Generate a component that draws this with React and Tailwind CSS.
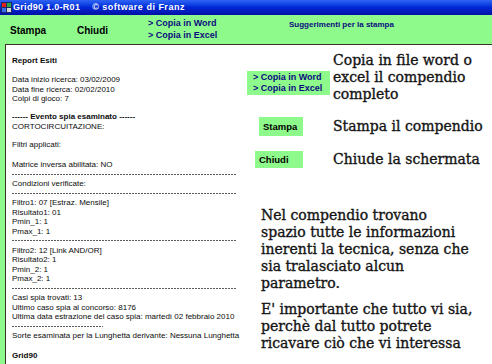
export default function App() {
  const dash = (w) => (
    <div className="h-[9.5px] flex items-center">
      <div
        className="h-px bg-[image:repeating-linear-gradient(90deg,#5a5a5a_0px,#5a5a5a_2px,transparent_2px,transparent_3px)]"
        style={{ width: w }}
      />
    </div>
  )

  return (
    <div className="w-[492px] h-[364px] overflow-hidden bg-white font-['Liberation_Sans',Arial,sans-serif]">
      {/* title bar */}
      <div className="h-[15px] flex items-center bg-gradient-to-b from-[#2f63f5] via-[#0026d6] to-[#0010a4] text-white font-bold text-[9px] leading-[15px]">
        <svg width="11" height="11" viewBox="0 0 11 11" className="ml-[1px]">
          <rect x="0" y="0" width="11" height="11" fill="#1c2a6a" />
          <rect x="1" y="1" width="4" height="4" fill="#e02020" />
          <rect x="6" y="1" width="4" height="4" fill="#2fa84a" />
          <rect x="1" y="6" width="4" height="4" fill="#3a6cf0" />
          <rect x="6" y="6" width="4" height="4" fill="#d8d8d8" />
        </svg>
        <span className="ml-[1px] tracking-[0.3px]">Grid90 1.0-R01</span>
        <span className="ml-[12px] tracking-[0.5px]">© software di Franz</span>
      </div>

      {/* toolbar */}
      <div className="h-[29px] flex items-start pl-[10px] bg-[#8ffa8c] font-bold">
        <div className="w-[67px] mt-[10px] text-[10px] leading-[12px] text-black">Stampa</div>
        <div className="w-[71px] mt-[10px] text-[10px] leading-[12px] text-black">Chiudi</div>
        <div className="w-[141px] mt-[3px] text-[9px] leading-[11.5px] text-[#0b0b80]">
          <div>&gt; Copia in Word</div>
          <div>&gt; Copia in Excel</div>
        </div>
        <div className="mt-[4px] text-[8px] leading-[11px] text-[#0b0b80]">Suggerimenti per la stampa</div>
      </div>

      {/* main */}
      <div className="flex h-[320px]">
        <div className="w-[5px] bg-[#8ffa8c]" />
        <div className="flex-1 flex border-l border-t border-[#3a3128] bg-white">
          {/* report */}
          <div className="w-[239px] pl-[6px] pt-[11px] text-[8px] leading-[9.5px] text-[#0c0c0c] whitespace-nowrap">
            <div className="font-bold">Report Esiti</div>
            <div className="mt-[9.5px]">Data inizio ricerca: 03/02/2009</div>
            <div>Data fine ricerca: 02/02/2010</div>
            <div>Colpi di gioco: 7</div>
            <div className="mt-[8.5px] font-bold">------ Evento spia esaminato ------</div>
            <div>CORTOCIRCUITAZIONE:</div>
            <div className="mt-[9px]">Filtri applicati:</div>
            <div className="mt-[10.5px]">Matrice inversa abilitata: NO</div>
            {dash(225)}
            <div>Condizioni verificate:</div>
            {dash(225)}
            <div>Filtro1: 07 [Estraz. Mensile]</div>
            <div>Risultato1: 01</div>
            <div>Pmin_1: 1</div>
            <div>Pmax_1: 1</div>
            {dash(225)}
            <div>Filtro2: 12 [Link AND/OR]</div>
            <div>Risultato2: 1</div>
            <div>Pmin_2: 1</div>
            <div>Pmax_2: 1</div>
            {dash(225)}
            <div>Casi spia trovati: 13</div>
            <div>Ultimo caso spia al concorso: 8176</div>
            <div>Ultima data estrazione del caso spia: martedì 02 febbraio 2010</div>
            {dash(91)}
            <div>Sorte esaminata per la Lunghetta derivante: Nessuna Lunghetta</div>
            <div className="mt-[10px] font-bold">Grid90</div>
          </div>

          {/* annotations */}
          <div className="flex-1 flex flex-col pt-[6.5px] font-['DejaVu_Serif',serif] text-[14px] leading-[17px] text-[#141414] [-webkit-text-stroke:0.35px_#141414]">
            <div className="flex items-start">
              <div className="w-[88px] shrink-0 [-webkit-text-stroke:0px]">
                <div className="ml-[2px] mt-[19.5px] w-[83px] h-[24px] pl-[6px] pt-[1px] bg-[#8ffa8c] font-['Liberation_Sans',Arial,sans-serif] font-bold text-[9px] leading-[11px] text-[#0b0b80]">
                  <div>&gt; Copia in Word</div>
                  <div>&gt; Copia in Excel</div>
                </div>
              </div>
              <div>
                Copia in file word o<br />excel il compendio<br />completo
              </div>
            </div>

            <div className="flex items-center mt-[14px]">
              <div className="w-[88px] shrink-0 [-webkit-text-stroke:0px]">
                <div className="ml-[14px] w-[44px] h-[19px] pl-[4px] flex items-center bg-[#8ffa8c] font-['Liberation_Sans',Arial,sans-serif] font-bold text-[9.5px] text-black">
                  Stampa
                </div>
              </div>
              <div>Stampa il compendio</div>
            </div>

            <div className="flex items-center mt-[15px]">
              <div className="w-[88px] shrink-0 [-webkit-text-stroke:0px]">
                <div className="ml-[10px] w-[48px] h-[17px] pl-[4px] flex items-center bg-[#8ffa8c] font-['Liberation_Sans',Arial,sans-serif] font-bold text-[9.5px] text-black">
                  Chiudi
                </div>
              </div>
              <div>Chiude la schermata</div>
            </div>

            <div className="mt-[39px] pl-[16px]">
              <p>
                Nel compendio trovano<br />spazio tutte le informazioni<br />inerenti la tecnica, senza che<br />sia tralasciato alcun<br />parametro.
              </p>
              <p className="mt-[9px]">
                E' importante che tutto vi sia,<br />perchè dal tutto potrete<br />ricavare ciò che vi interessa
              </p>
            </div>
          </div>
        </div>
      </div>
    </div>
  )
}
